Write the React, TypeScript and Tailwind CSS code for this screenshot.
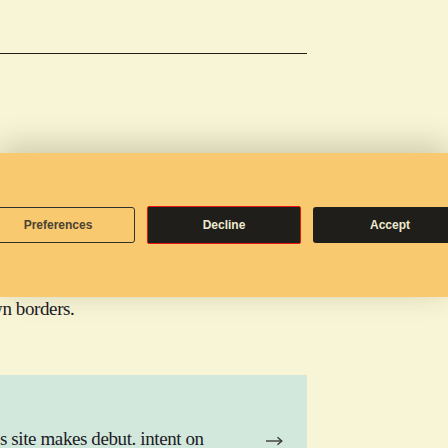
import React from "react";

const serif = "font-['Liberation_Serif',Georgia,serif]";
const sans = "font-['Liberation_Sans',Arial,sans-serif]";

function CookieBanner() {
  return (
    <div className="absolute left-0 right-0 top-[153px] h-[144px] bg-[#f9c96f] shadow-[0_-7px_30px_rgba(40,36,0,0.22)] flex items-center justify-center">
      <div className={`flex gap-3 shrink-0 ${sans} text-[12px] font-bold`}>
        <button className="w-[154px] h-[36px] shrink-0 rounded-[3px] border border-[#33312c] text-[#4b4232]">
          Preferences
        </button>
        <button className="w-[154px] h-[38px] -my-px shrink-0 rounded-[2px] border border-[#e8160f] bg-[#1f1e1b] text-[#eeeacf]">
          Decline
        </button>
        <button className="w-[154px] h-[36px] shrink-0 rounded-[3px] bg-[#1f1e1b] text-[#eeeacf]">
          Accept
        </button>
      </div>
    </div>
  );
}

export default function App() {
  return (
    <div className="relative w-[448px] h-[448px] overflow-hidden bg-[#f8f4d6]">
      <div className="flex flex-col w-[307px]">
        <div className="mt-[53px] h-px bg-[#1f1e1b]" />
        <p className={`mt-[241px] -ml-[20px] whitespace-nowrap ${serif} text-[19px] tracking-[-0.4px] leading-[28px] text-[#1c1b26]`}>
          own borders.
        </p>
        <div className="mt-[52px] h-[80px] bg-[#d3e8dc] pt-[50px] flex items-start">
          <span className={`w-[266px] shrink-0 whitespace-nowrap ${serif} text-[19px] tracking-[-0.4px] leading-[28px] text-[#1c1b26]`}>
            s site makes debut. intent on
          </span>
          <svg className="mt-[11px] shrink-0" width="17" height="10" viewBox="0 0 17 10" fill="none" stroke="#3a3a3a" strokeWidth="1.4">
            <path d="M0 5h15.5" />
            <path d="M11.5 1.2 15.8 5l-4.3 3.8" />
          </svg>
        </div>
      </div>
      <CookieBanner />
    </div>
  );
}
